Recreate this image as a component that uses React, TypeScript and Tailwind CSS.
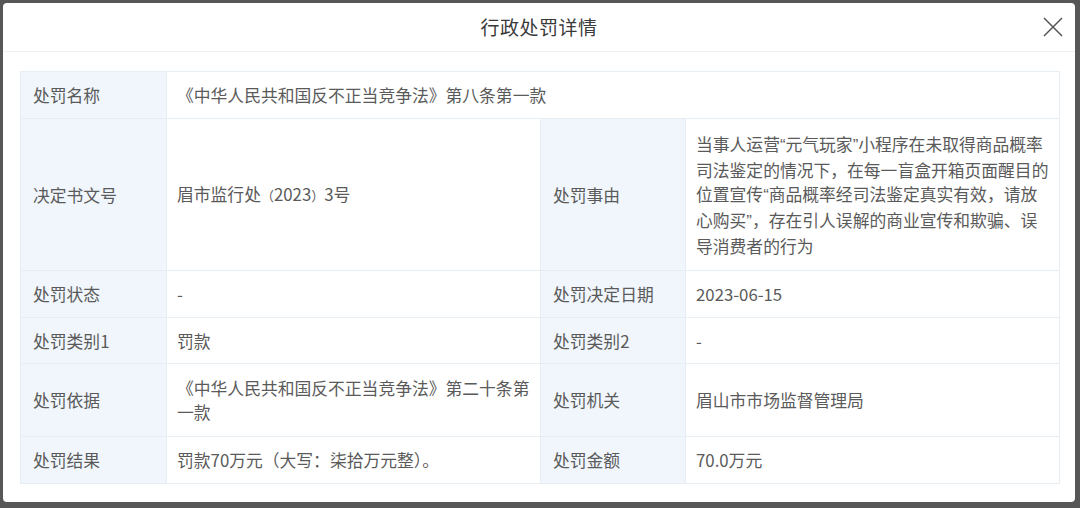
const FONT = "font-['Noto_Sans_CJK_SC','Liberation_Sans',sans-serif]";

const LABEL = "bg-[#f0f6fc] px-3 align-middle border border-[#e6edf3] text-[#5a5a5a]";
const VALUE = "bg-white px-[10px] align-middle border border-[#e6edf3] text-[#5a5a5a]";

function Q({ c }: { c: string }) {
  return <span className="font-['Liberation_Sans',sans-serif]">{c}</span>;
}

function CloseIcon() {
  return (
    <svg width="20" height="20" viewBox="0 0 20 20" fill="none">
      <path d="M1 1L19 19M19 1L1 19" stroke="#555" strokeWidth="1.5" />
    </svg>
  );
}

export default function App() {
  return (
    <div className={`w-[1080px] h-[508px] bg-[#575757] pt-[3px] pl-[3px] overflow-hidden ${FONT}`}>
      <div className="w-[1072px] h-[499px] bg-white rounded-[4px] flex flex-col">
        {/* Header */}
        <div className="h-[49px] shrink-0 border-b border-[#eef0f2] flex items-center justify-center relative">
          <h2 className="text-[19px] text-[#3a3a3a] tracking-[0.5px]">行政处罚详情</h2>
          <button className="absolute right-[12px] top-[14px] p-0">
            <CloseIcon />
          </button>
        </div>

        {/* Body */}
        <div className="pt-[19px] pl-[17px] pr-[16px]">
          <table className="w-[1039px] border-collapse table-fixed text-[16.8px] leading-[24px]">
            <colgroup>
              <col className="w-[146px]" />
              <col className="w-[374px]" />
              <col className="w-[145px]" />
              <col className="w-[374px]" />
            </colgroup>
            <tbody>
              <tr className="h-[47px]">
                <td className={LABEL}>处罚名称</td>
                <td className={VALUE} colSpan={3}>
                  《中华人民共和国反不正当竞争法》第八条第一款
                </td>
              </tr>
              <tr className="h-[152px]">
                <td className={LABEL}>决定书文号</td>
                <td className={VALUE}>
                  眉市监行处<span className="text-[13px]">（</span>2023<span className="text-[13px]">）</span>3号
                </td>
                <td className={LABEL}>处罚事由</td>
                <td className={VALUE}>
                  当事人运营<Q c="“" />元气玩家<Q c="”" />小程序在未取得商品概率司法鉴定的情况下，在每一盲盒开箱页面醒目的位置宣传<Q c="“" />商品概率经司法鉴定真实有效，请放心购买<Q c="”" />，存在引人误解的商业宣传和欺骗、误导消费者的行为
                </td>
              </tr>
              <tr className="h-[47px]">
                <td className={LABEL}>处罚状态</td>
                <td className={VALUE}>-</td>
                <td className={LABEL}>处罚决定日期</td>
                <td className={VALUE}>2023-06-15</td>
              </tr>
              <tr className="h-[46px]">
                <td className={LABEL}>处罚类别1</td>
                <td className={VALUE}>罚款</td>
                <td className={LABEL}>处罚类别2</td>
                <td className={VALUE}>-</td>
              </tr>
              <tr className="h-[73px]">
                <td className={LABEL}>处罚依据</td>
                <td className={VALUE}>《中华人民共和国反不正当竞争法》第二十条第一款</td>
                <td className={LABEL}>处罚机关</td>
                <td className={VALUE}>眉山市市场监督管理局</td>
              </tr>
              <tr className="h-[47px]">
                <td className={LABEL}>处罚结果</td>
                <td className={VALUE}>罚款70万元（大写：柒拾万元整）。</td>
                <td className={LABEL}>处罚金额</td>
                <td className={VALUE}>70.0万元</td>
              </tr>
            </tbody>
          </table>
        </div>
      </div>
    </div>
  );
}
